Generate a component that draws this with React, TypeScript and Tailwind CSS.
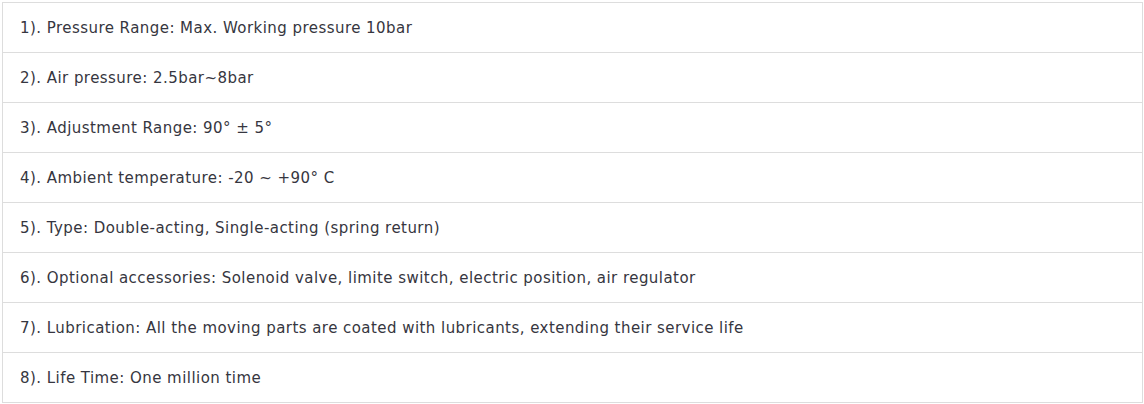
const SPECS = [
  "1). Pressure Range: Max. Working pressure 10bar",
  "2). Air pressure: 2.5bar~8bar",
  "3). Adjustment Range: 90° ± 5°",
  "4). Ambient temperature: -20 ~ +90° C",
  "5). Type: Double-acting, Single-acting (spring return)",
  "6). Optional accessories: Solenoid valve, limite switch, electric position, air regulator",
  "7). Lubrication: All the moving parts are coated with lubricants, extending their service life",
  "8). Life Time: One million time",
];

export default function App() {
  return (
    <div className="bg-white pt-[2px] pl-[2px] w-[1144px] h-[404px]">
      <table className="w-[1141px] border-collapse">
        <tbody>
          {SPECS.map((s, i) => (
            <tr key={i}>
              <td className="h-[50px] border border-[#dddddd] pl-[17px] pt-[2px] align-middle text-[15px] tracking-[0.45px] text-[#363640] font-['DejaVu_Sans',sans-serif]">
                {s}
              </td>
            </tr>
          ))}
        </tbody>
      </table>
    </div>
  );
}
